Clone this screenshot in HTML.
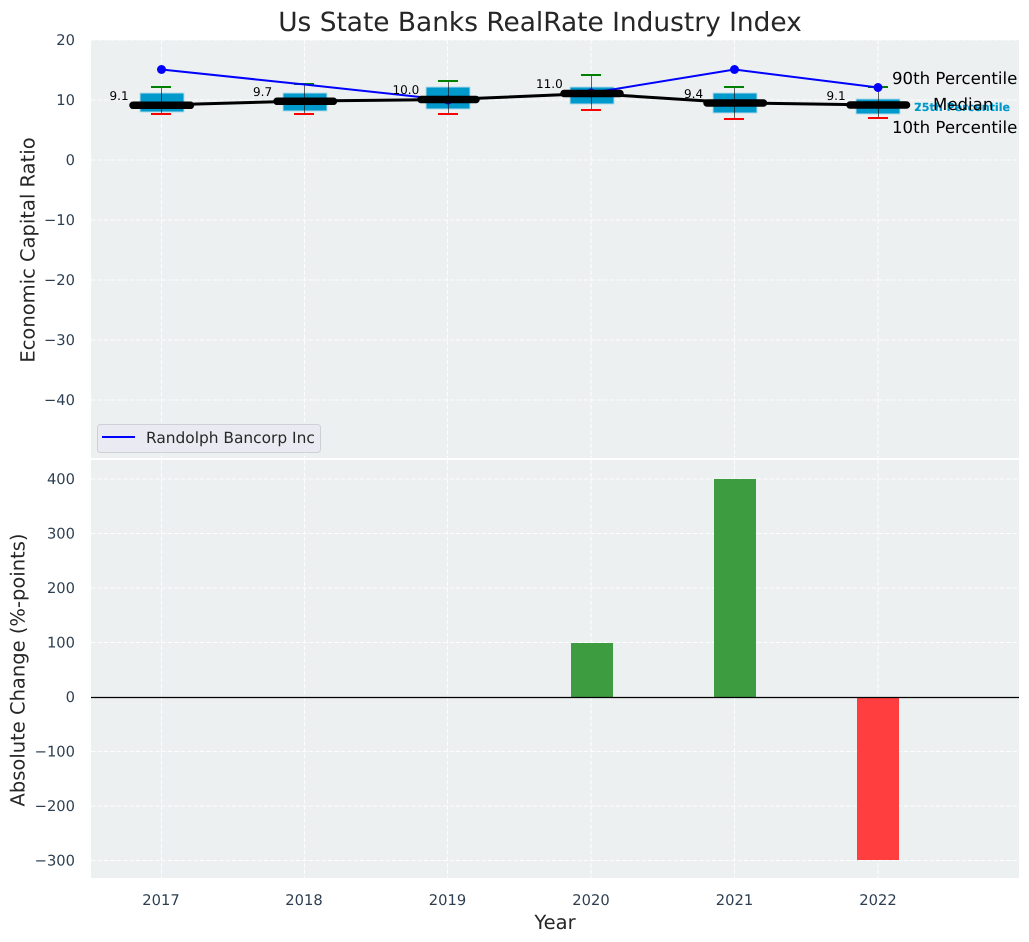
<!DOCTYPE html>
<html><head><meta charset="utf-8"><style>
html,body{margin:0;padding:0;background:#fff;width:1029px;height:942px;overflow:hidden}
svg{display:block}
text{font-family:"DejaVu Sans",sans-serif;text-rendering:geometricPrecision}
.t{font-size:14.7px;fill:#2c3e50}
.g{stroke:#fff;stroke-width:1.1;stroke-dasharray:4.4 2;opacity:.9}
.v{font-size:12px;fill:#000}
.l{font-size:16.6px;fill:#000}
.a{font-size:19.5px;fill:#262626}
</style></head><body>
<svg width="1029" height="942" viewBox="0 0 1029 942" xmlns="http://www.w3.org/2000/svg">
<rect x="91" y="40" width="928" height="418" fill="#ecf0f1"/>
<rect x="91" y="460" width="928" height="418" fill="#ecf0f1"/>
<g class="g">
<path d="M91 40H1019M91 100H1019M91 160H1019M91 220H1019M91 280H1019M91 340H1019M91 400H1019"/>
<path d="M161.500 40V458M304.500 40V458M447.500 40V458M591 40V458M734.500 40V458M878 40V458"/>
<path d="M91 479H1019M91 533.500H1019M91 588H1019M91 642.500H1019M91 751.500H1019M91 806H1019M91 860.500H1019"/>
<path d="M161.500 460V878M304.500 460V878M447.500 460V878M591 460V878M734.500 460V878M878 460V878"/>
</g>
<text x="540" y="31" text-anchor="middle" style="font-size:26.4px;fill:#262626">Us State Banks RealRate Industry Index</text>
<g class="t" text-anchor="end">
<text x="75" y="45">20</text><text x="75" y="105">10</text><text x="75" y="165">0</text>
<text x="75" y="225">−10</text><text x="75" y="285">−20</text><text x="75" y="345">−30</text><text x="75" y="405">−40</text>
<text x="75" y="484">400</text><text x="75" y="538.500">300</text><text x="75" y="593">200</text><text x="75" y="647.500">100</text><text x="75" y="702">0</text>
<text x="75" y="756.500">−100</text><text x="75" y="811">−200</text><text x="75" y="865.500">−300</text>
</g>
<g class="t" text-anchor="middle">
<text x="161" y="905">2017</text><text x="304" y="905">2018</text><text x="447.500" y="905">2019</text><text x="591" y="905">2020</text><text x="734.500" y="905">2021</text><text x="878" y="905">2022</text>
</g>
<text class="a" text-anchor="middle" transform="translate(34.500 250) rotate(-90)">Economic Capital Ratio</text>
<text class="a" text-anchor="middle" transform="translate(24.500 670) rotate(-90)">Absolute Change (%-points)</text>
<text class="a" x="555" y="929" text-anchor="middle">Year</text>

<g fill="#0099cc" stroke="#b5dcea" stroke-width="1">
<rect x="140" y="93" width="44" height="19"/>
<rect x="283" y="93" width="44" height="18"/>
<rect x="426" y="87" width="44" height="22"/>
<rect x="570" y="87" width="44" height="17"/>
<rect x="713" y="93" width="44" height="20"/>
<rect x="856" y="99" width="44" height="15"/>
</g>
<g stroke="#000" stroke-opacity=".6" stroke-width="1" fill="none">
<path d="M161.500 87V114M304.500 84V114M448.500 81V114M591.500 75V110M734.500 87V119M878.500 87V118"/>
</g>
<g stroke="#008000" stroke-width="2"><path d="M151 87H171M294 84H314M438 81H458M581 75H601M724 87H744M868 87H888"/></g>
<g stroke="#f00" stroke-width="2"><path d="M151 114H171M294 114H314M438 114H458M581 110H601M724 119H744M868 118H888"/></g>
<path d="M161.500 69.500L304.500 84.500L447.500 100L591 93L734.500 69.500L878 87.500" fill="none" stroke="#00f" stroke-width="2"/>
<g fill="#00f"><circle cx="161.500" cy="69.500" r="4.500"/><circle cx="734.500" cy="69.500" r="4.500"/><circle cx="878" cy="87.500" r="4.500"/><circle cx="448" cy="100" r="4.500" fill="#0000cc"/><circle cx="591" cy="93" r="4.500" fill="#0000cc"/></g>
<path d="M161.500 105L304.500 101L448 99.500L591 93.500L734.500 102.800L878 105" fill="none" stroke="#000" stroke-width="3"/>
<g stroke="#000" stroke-width="7.500" stroke-linecap="round">
<path d="M133 105.300H190.500M277 101.300H333.500M421 99.500H476M564 93.500H620M707 103H763.500M850 105H906.500"/>
</g>
<g class="v">
<text x="109.500" y="100">9.1</text><text x="253" y="96">9.7</text><text x="392.500" y="94">10.0</text><text x="536" y="88">11.0</text><text x="684" y="98">9.4</text><text x="826.500" y="100">9.1</text>
</g>
<text x="914" y="111" style="font-size:11.1px;font-weight:bold;fill:#0099cc">25th Percentile</text>
<text x="914" y="111" style="font-size:11.1px;font-weight:bold;fill:#0099cc">75th Percentile</text>
<text class="l" x="892" y="84">90th Percentile</text>
<text class="l" x="933" y="110">Median</text>
<text class="l" x="892" y="133">10th Percentile</text>

<rect x="97.500" y="424.500" width="223" height="28" rx="3" fill="#eaeaf2" stroke="#cfcfd6" stroke-width="1"/>
<path d="M102 437H135" stroke="#00f" stroke-width="2"/>
<text x="146" y="443" style="font-size:15.4px;fill:#262626">Randolph Bancorp Inc</text>

<rect x="571" y="643" width="42" height="54" fill="#3d9c3f"/>
<rect x="714" y="479" width="42" height="218" fill="#3d9c3f"/>
<rect x="857" y="697" width="42" height="163" fill="#ff3f3f"/>
<path d="M91 697.500H1019" stroke="#000" stroke-width="1.300"/>
</svg>
</body></html>
